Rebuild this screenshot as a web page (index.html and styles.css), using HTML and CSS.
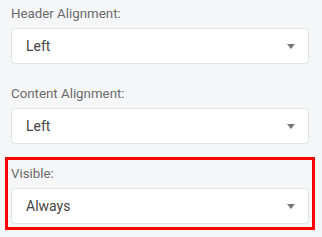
FILE: index.html
```html
<!DOCTYPE html>
<html lang="en">
  <head>
    <meta charset="UTF-8" />
    <meta name="viewport" content="width=device-width, initial-scale=1.0" />
    <title>Column settings</title>
    <link rel="stylesheet" href="styles.css">
  </head>
  <body>
    <div class="panel">
      <div class="field">
        <label>Header Alignment:</label>
        <div class="dropdown">
          <span>Left</span>
          <span class="caret"></span>
        </div>
      </div>

      <div class="field">
        <label>Content Alignment:</label>
        <div class="dropdown">
          <span>Left</span>
          <span class="caret"></span>
        </div>
      </div>

      <div class="field highlight">
        <label>Visible:</label>
        <div class="dropdown">
          <span>Always</span>
          <span class="caret"></span>
        </div>
      </div>
    </div>
  </body>
</html>
```

FILE: styles.css
```css
body {
  font-family: Roboto, "Liberation Sans", sans-serif;
  margin: 0;
  padding: 0;
  background-color: #f6f7f9;
  overflow: hidden;
}
.panel {
  display: flex;
  flex-direction: column;
  gap: 7px;
  margin-top: -3px;
  margin-left: 5px;
  width: 310px;
}
.field {
  border: 3px solid transparent;
  padding: 6px 3px 3px 3px;
}
.field.highlight {
  border-color: #ff0000;
}
label {
  display: block;
  font-size: 13.3px;
  line-height: 16px;
  color: #6a6a6a;
  margin-bottom: 6px;
}
.dropdown {
  display: flex;
  align-items: center;
  justify-content: space-between;
  height: 34px;
  padding: 0 13px 0 14px;
  background: #fff;
  border: 1px solid #e2e3e5;
  border-radius: 4px;
  font-size: 14px;
  color: #444;
}
.caret {
  width: 0;
  height: 0;
  border-left: 4px solid transparent;
  border-right: 4px solid transparent;
  border-top: 5px solid #777;
}
```
